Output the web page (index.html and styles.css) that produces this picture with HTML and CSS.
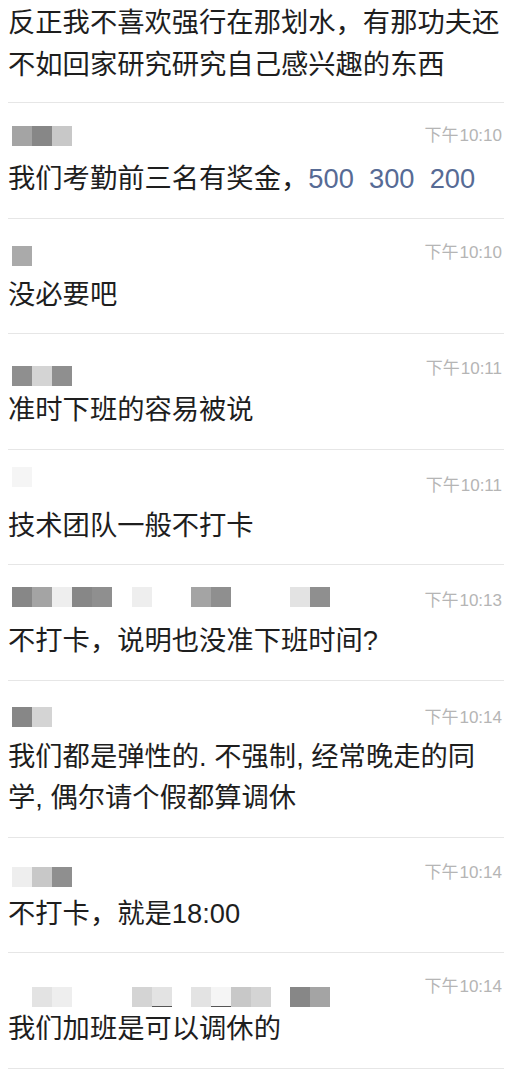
FILE: index.html
```html
<!DOCTYPE html>
<html lang="zh-CN">
<head>
<meta charset="utf-8">
<title>评论</title>
<link rel="stylesheet" href="styles.css">
</head>
<body>
<div class="feed">
  <div class="msg lead">
    <p class="text">反正我不喜欢强行在那划水，有那功夫还<br>不如回家研究研究自己感兴趣的东西</p>
  </div>

  <div class="msg">
    <div class="head v2">
      <div class="name"><i class="blk k3"></i><i class="blk k1"></i><i class="blk k5"></i></div>
      <span class="time">下午<span class="clock">10:10</span></span>
    </div>
    <p class="text">我们考勤前三名有奖金，<span class="link">500  300  200</span></p>
  </div>

  <div class="msg">
    <div class="head v3">
      <div class="name"><i class="blk k4"></i></div>
      <span class="time">下午<span class="clock">10:10</span></span>
    </div>
    <p class="text">没必要吧</p>
  </div>

  <div class="msg">
    <div class="head v4">
      <div class="name"><i class="blk k2"></i><i class="blk k6"></i><i class="blk k2"></i></div>
      <span class="time">下午<span class="clock">10:11</span></span>
    </div>
    <p class="text">准时下班的容易被说</p>
  </div>

  <div class="msg">
    <div class="head v5">
      <div class="name"><i class="blk k9"></i></div>
      <span class="time">下午<span class="clock">10:11</span></span>
    </div>
    <p class="text">技术团队一般不打卡</p>
  </div>

  <div class="msg">
    <div class="head v6">
      <div class="name">
        <i class="blk k1"></i><i class="blk k3"></i><i class="blk k8"></i><i class="blk k1"></i><i class="blk k2"></i>
        <i class="blk k8 sp20"></i>
        <i class="blk k3 sp39"></i><i class="blk k2"></i>
        <i class="blk k7 sp59"></i><i class="blk k2"></i>
      </div>
      <span class="time">下午<span class="clock">10:13</span></span>
    </div>
    <p class="text">不打卡，说明也没准下班时间?</p>
  </div>

  <div class="msg">
    <div class="head v7">
      <div class="name"><i class="blk k1"></i><i class="blk k6"></i></div>
      <span class="time">下午<span class="clock">10:14</span></span>
    </div>
    <p class="text">我们都是弹性的. 不强制, 经常晚走的同<br>学, 偶尔请个假都算调休</p>
  </div>

  <div class="msg">
    <div class="head v8">
      <div class="name"><i class="blk k8"></i><i class="blk k5"></i><i class="blk k2"></i></div>
      <span class="time">下午<span class="clock">10:14</span></span>
    </div>
    <p class="text">不打卡，就是18:00</p>
  </div>

  <div class="msg">
    <div class="head v9">
      <div class="name">
        <i class="blk k7 sp20"></i><i class="blk k8"></i>
        <i class="blk k6 sp60"></i><i class="blk k7 ul"></i>
        <i class="blk k7 sp19"></i><i class="blk k9 ul"></i><i class="blk k5"></i><i class="blk k6"></i>
        <i class="blk k1 sp19"></i><i class="blk k3"></i>
      </div>
      <span class="time">下午<span class="clock">10:14</span></span>
    </div>
    <p class="text">我们加班是可以调休的</p>
  </div>
</div>
</body>
</html>
```

FILE: styles.css
```css
html, body {
  margin: 0;
  padding: 0;
  background: #ffffff;
}

body {
  font-family: "Liberation Sans", "Noto Sans CJK SC", sans-serif;
  color: #1e1e1e;
}

.feed {
  padding: 0 22px 0 8px;
}

.msg {
  border-bottom: 1px solid #e6e6e6;
  padding-bottom: 18px;
}

.msg.lead {
  padding-top: 2px;
  padding-bottom: 17px;
}

.head {
  height: 55px;
  display: flex;
  justify-content: space-between;
  align-items: flex-start;
  padding: 0 2px 0 4px;
  box-sizing: border-box;
}

.name {
  display: flex;
}

.blk {
  display: block;
  width: 20px;
  height: 20px;
  box-sizing: border-box;
}

.k1 { background: #878787; }
.k2 { background: #8f8f8f; }
.k3 { background: #a4a4a4; }
.k4 { background: #aaaaaa; }
.k5 { background: #c8c8c8; }
.k6 { background: #d4d4d4; }
.k7 { background: #e3e3e3; }
.k8 { background: #eeeeee; }
.k9 { background: #f5f5f5; }

.sp19 { margin-left: 19px; }
.sp20 { margin-left: 20px; }
.sp39 { margin-left: 39px; }
.sp59 { margin-left: 59px; }
.sp60 { margin-left: 60px; }

.ul {
  border-bottom: 1px solid #555555;
}

.time {
  font-size: 17px;
  line-height: 20px;
  color: #b5b5b5;
  white-space: nowrap;
}

.clock {
  margin-left: 1px;
}

.v2 .name { margin-top: 23px; }
.v2 .time { margin-top: 23px; }
.v3 .name { margin-top: 27px; }
.v3 .time { margin-top: 24px; }
.v4 .name { margin-top: 32px; }
.v4 .time { margin-top: 25px; }
.v5 .name { margin-top: 17px; }
.v5 .time { margin-top: 26px; }
.v6 .name { margin-top: 22px; }
.v6 .time { margin-top: 26px; }
.v7 .name { margin-top: 26px; }
.v7 .time { margin-top: 27px; }
.v8 .name { margin-top: 29px; }
.v8 .time { margin-top: 25px; }
.v9 .name { margin-top: 34px; }
.v9 .time { margin-top: 24px; }

.text {
  margin: 0;
  font-size: 27.3px;
  line-height: 41.5px;
  white-space: nowrap;
}

.link {
  color: #576b95;
  white-space: pre;
}
```
